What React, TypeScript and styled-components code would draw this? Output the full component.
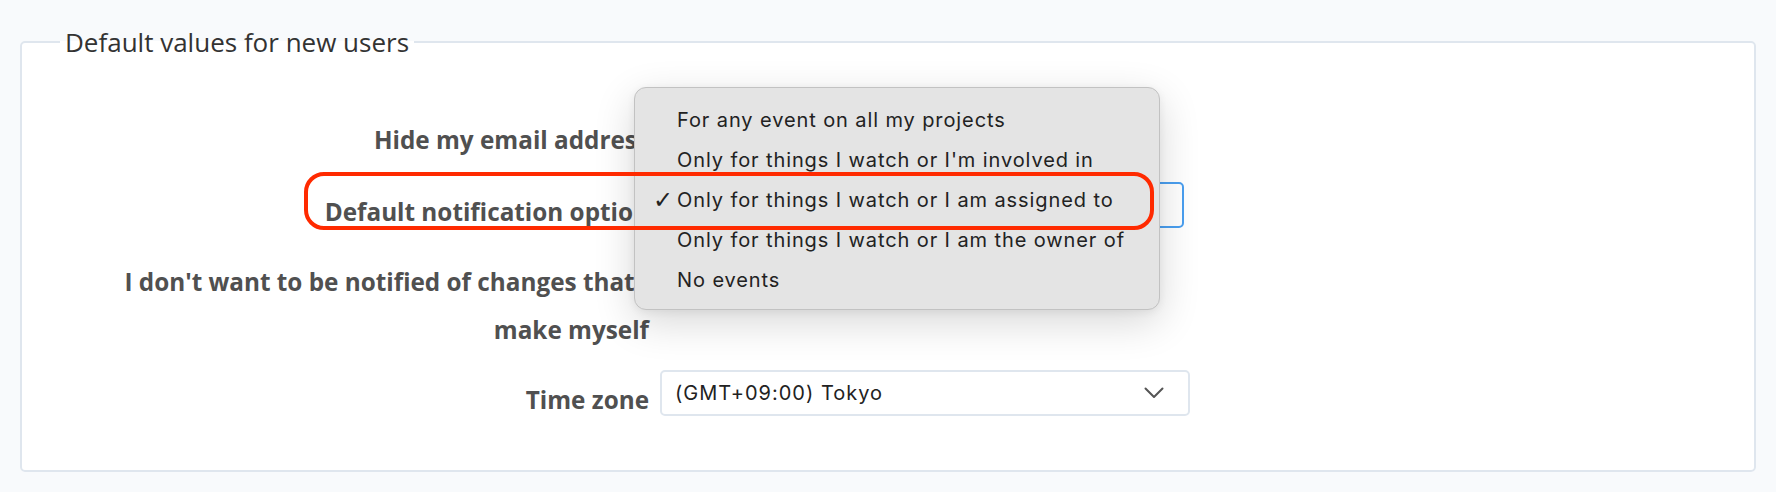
import styled, { createGlobalStyle } from "styled-components";

const GlobalStyle = createGlobalStyle`
  body {
    margin: 0;
    background: #f8fafc;
    font-family: "Open Sans", "Noto Sans", sans-serif;
  }
`;

const Page = styled.div`
  padding: 24px 20px 20px 20px;
`;

const Box = styled.fieldset`
  margin: 0;
  padding: 50px 0 46px 0;
  border: 2px solid #dfe6ee;
  border-radius: 5px;
  background: #fff;
  display: flex;
  flex-direction: column;
  gap: 16px;
`;

const Legend = styled.legend`
  margin-left: 38px;
  padding: 0 5px;
  font-size: 26px;
  color: #333;
`;

const Row = styled.div<{ $minHeight?: number }>`
  display: grid;
  grid-template-columns: 562px 1fr;
  column-gap: 11px;
  align-items: start;
  padding-left: 65px;
  min-height: ${(p) => p.$minHeight ?? 0}px;
`;

const Label = styled.label`
  padding-top: 6px;
  text-align: right;
  font-size: 24.3px;
  font-weight: 700;
  line-height: 48px;
  color: #505050;
`;

const Checkbox = styled.input`
  margin: 20px 0 0 0;
  width: 22px;
  height: 22px;
`;

const SelectWrap = styled.div`
  position: relative;
`;

const Select = styled.div<{ $width: number; $focused?: boolean }>`
  box-sizing: border-box;
  width: ${(p) => p.$width}px;
  height: 46px;
  display: flex;
  align-items: center;
  justify-content: space-between;
  padding: 0 24px 0 13px;
  border: 2px solid ${(p) => (p.$focused ? "#4a9ff0" : "#dfe6ee")};
  border-radius: 5px;
  background: #fff;
  font-family: Inter, "Liberation Sans", sans-serif;
  font-size: 20px;
  letter-spacing: 1px;
  color: #222;
`;

const Popup = styled.ul`
  position: absolute;
  top: -95px;
  left: -26px;
  z-index: 2;
  box-sizing: border-box;
  width: 526px;
  margin: 0;
  padding: 12px 0 9px 0;
  list-style: none;
  background: #e4e4e4;
  border: 1px solid #c2c2c2;
  border-radius: 12px;
  box-shadow: 0 12px 40px rgba(0, 0, 0, 0.16), 0 2px 8px rgba(0, 0, 0, 0.06);
  font-family: Inter, "Liberation Sans", sans-serif;
  font-size: 20px;
  letter-spacing: 0.9px;
  color: #222;
`;

const Item = styled.li`
  display: grid;
  grid-template-columns: 42px 1fr;
  align-items: center;
  height: 40px;
  white-space: nowrap;
`;

const Check = styled.span`
  justify-self: end;
  padding-right: 3px;
  font-family: "DejaVu Sans", sans-serif;
  font-size: 24px;
  line-height: 1;
`;

const Highlight = styled.div`
  position: absolute;
  top: -10px;
  left: -356px;
  z-index: 3;
  box-sizing: border-box;
  width: 850px;
  height: 58px;
  border: 4.5px solid #ff2a00;
  border-radius: 20px;
  pointer-events: none;
`;

const Chevron = () => (
  <svg width="20" height="12" viewBox="0 0 20 12" fill="none">
    <path d="M1.5 1.5 L10 10 L18.5 1.5" stroke="#555" strokeWidth="2" strokeLinecap="round" strokeLinejoin="round" />
  </svg>
);

const options = [
  "For any event on all my projects",
  "Only for things I watch or I'm involved in",
  "Only for things I watch or I am assigned to",
  "Only for things I watch or I am the owner of",
  "No events",
];

const selected = 2;

export default function App() {
  return (
    <>
      <GlobalStyle />
      <Page>
        <Box>
          <Legend>Default values for new users</Legend>
          <Row $minHeight={56}>
            <Label>Hide my email address</Label>
            <Checkbox type="checkbox" />
          </Row>
          <Row>
            <Label>Default notification option</Label>
            <SelectWrap>
              <Select $width={524} $focused>
                {options[selected]}
                <Chevron />
              </Select>
              <Popup>
                {options.map((o, i) => (
                  <Item key={o}>
                    <Check>{i === selected ? "✓" : ""}</Check>
                    {o}
                  </Item>
                ))}
              </Popup>
              <Highlight />
            </SelectWrap>
          </Row>
          <Row>
            <Label>I don't want to be notified of changes that I make myself</Label>
            <Checkbox type="checkbox" />
          </Row>
          <Row>
            <Label>Time zone</Label>
            <Select $width={530}>
              (GMT+09:00) Tokyo
              <Chevron />
            </Select>
          </Row>
        </Box>
      </Page>
    </>
  );
}
